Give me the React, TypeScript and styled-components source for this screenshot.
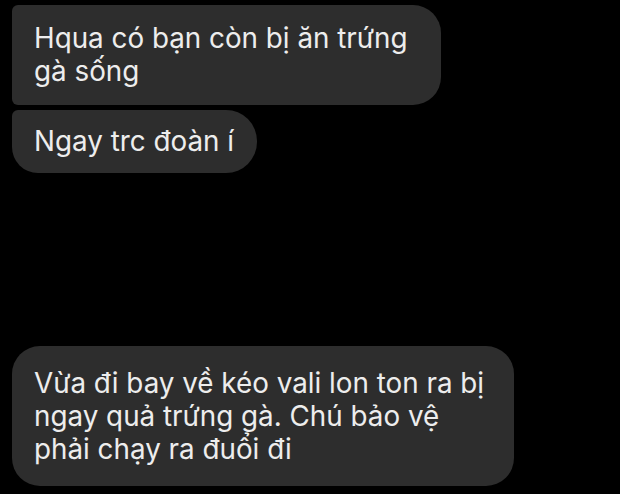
import React from "react";
import styled, { createGlobalStyle } from "styled-components";

const Global = createGlobalStyle`
  html, body {
    margin: 0;
    padding: 0;
    background: #000;
  }
  body {
    width: 620px;
    height: 494px;
    overflow: hidden;
    font-family: Inter, "Noto Sans", Roboto, sans-serif;
  }
`;

const Screen = styled.div`
  width: 620px;
  height: 494px;
  background: #000;
  box-sizing: border-box;
  padding: 5px 0 0 12px;
  display: flex;
  flex-direction: column;
`;

const Group = styled.div<{ $gap: number; $mt?: number }>`
  display: flex;
  flex-direction: column;
  align-items: flex-start;
  gap: ${(p) => p.$gap}px;
  margin-top: ${(p) => p.$mt ?? 0}px;
`;

type Pos = "first" | "last" | "single";

const radii: Record<Pos, string> = {
  first: "6px 28px 28px 6px",
  last: "6px 31px 31px 26px",
  single: "28px",
};

const Bubble = styled.div<{ $w: number; $h: number; $pos: Pos }>`
  box-sizing: border-box;
  width: ${(p) => p.$w}px;
  height: ${(p) => p.$h}px;
  padding: 0 21px 0 22px;
  display: flex;
  align-items: center;
  background: #2d2d2d;
  border-radius: ${(p) => radii[p.$pos]};
  color: #ededed;
  font-size: 27.8px;
  line-height: 33px;
`;

export default function App() {
  return (
    <>
      <Global />
      <Screen>
        <Group $gap={5}>
          <Bubble $w={429} $h={100} $pos="first">
            Hqua có bạn còn bị ăn trứng gà sống
          </Bubble>
          <Bubble $w={245} $h={63} $pos="last">
            Ngay trc đoàn í
          </Bubble>
        </Group>
        <Group $gap={0} $mt={173}>
          <Bubble $w={502} $h={140} $pos="single">
            Vừa đi bay về kéo vali lon ton ra bị ngay quả trứng gà. Chú bảo vệ phải chạy ra đuổi đi
          </Bubble>
        </Group>
      </Screen>
    </>
  );
}
